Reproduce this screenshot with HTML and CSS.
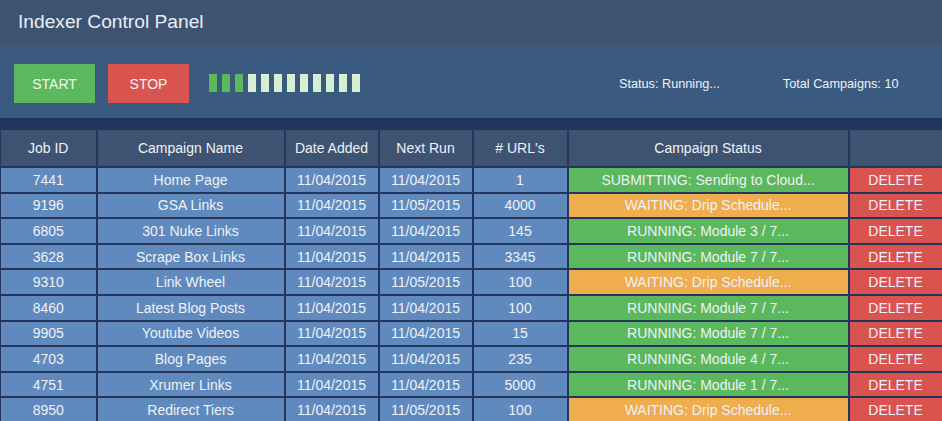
FILE: index.html
```html
<!DOCTYPE html>
<html>
<head>
<meta charset="utf-8">
<link rel="stylesheet" href="styles.css">
</head>
<body>
<header class="topbar"><h1 class="title">Indexer Control Panel</h1></header>
<section class="toolbar">
  <button class="btn btn-start">START</button>
  <button class="btn btn-stop">STOP</button>
  <div class="progress">
    <span class="seg on"></span><span class="seg on"></span><span class="seg on"></span>
    <span class="seg"></span><span class="seg"></span><span class="seg"></span><span class="seg"></span><span class="seg"></span><span class="seg"></span><span class="seg"></span><span class="seg"></span><span class="seg"></span>
  </div>
  <div class="info status">Status: Running...</div>
  <div class="info total">Total Campaigns: 10</div>
</section>
<div class="strip"></div>
<table class="grid">
  <colgroup>
    <col class="c-id"><col class="c-name"><col class="c-date"><col class="c-next"><col class="c-urls"><col class="c-status"><col class="c-del">
  </colgroup>
  <thead>
    <tr><th>Job ID</th><th>Campaign Name</th><th>Date Added</th><th>Next Run</th><th># URL's</th><th>Campaign Status</th><th></th></tr>
  </thead>
  <tbody>
    <tr><td>7441</td><td>Home Page</td><td>11/04/2015</td><td>11/04/2015</td><td>1</td><td class="st green">SUBMITTING: Sending to Cloud...</td><td class="del">DELETE</td></tr>
    <tr><td>9196</td><td>GSA Links</td><td>11/04/2015</td><td>11/05/2015</td><td>4000</td><td class="st orange">WAITING: Drip Schedule...</td><td class="del">DELETE</td></tr>
    <tr><td>6805</td><td>301 Nuke Links</td><td>11/04/2015</td><td>11/04/2015</td><td>145</td><td class="st green">RUNNING: Module 3 / 7...</td><td class="del">DELETE</td></tr>
    <tr><td>3628</td><td>Scrape Box Links</td><td>11/04/2015</td><td>11/04/2015</td><td>3345</td><td class="st green">RUNNING: Module 7 / 7...</td><td class="del">DELETE</td></tr>
    <tr><td>9310</td><td>Link Wheel</td><td>11/04/2015</td><td>11/05/2015</td><td>100</td><td class="st orange">WAITING: Drip Schedule...</td><td class="del">DELETE</td></tr>
    <tr><td>8460</td><td>Latest Blog Posts</td><td>11/04/2015</td><td>11/04/2015</td><td>100</td><td class="st green">RUNNING: Module 7 / 7...</td><td class="del">DELETE</td></tr>
    <tr><td>9905</td><td>Youtube Videos</td><td>11/04/2015</td><td>11/04/2015</td><td>15</td><td class="st green">RUNNING: Module 7 / 7...</td><td class="del">DELETE</td></tr>
    <tr><td>4703</td><td>Blog Pages</td><td>11/04/2015</td><td>11/04/2015</td><td>235</td><td class="st green">RUNNING: Module 4 / 7...</td><td class="del">DELETE</td></tr>
    <tr><td>4751</td><td>Xrumer Links</td><td>11/04/2015</td><td>11/04/2015</td><td>5000</td><td class="st green">RUNNING: Module 1 / 7...</td><td class="del">DELETE</td></tr>
    <tr><td>8950</td><td>Redirect Tiers</td><td>11/04/2015</td><td>11/05/2015</td><td>100</td><td class="st orange">WAITING: Drip Schedule...</td><td class="del">DELETE</td></tr>
  </tbody>
</table>
</body>
</html>
```
FILE: styles.css
```css
html, body {
  margin: 0;
  padding: 0;
  background: #22365c;
  font-family: "Liberation Sans", Arial, sans-serif;
  overflow: hidden;
}
.topbar {
  height: 45px;
  background: #3e5372;
  display: flex;
  align-items: center;
  padding-left: 18px;
}
.title {
  margin: 0;
  font-weight: normal;
  font-size: 19.2px;
  color: #e9eef6;
  position: relative;
  top: -1px;
}
.toolbar {
  height: 73px;
  background: #3a5a80;
  display: flex;
  align-items: flex-start;
  padding-left: 14px;
  box-sizing: border-box;
  padding-top: 19px;
}
.btn {
  width: 81px;
  height: 39px;
  border: none;
  margin: 0;
  padding: 0;
  color: #f4f6f4;
  font-family: "Liberation Sans", Arial, sans-serif;
  font-size: 14px;
}
.btn-start { background: #5cb85c; }
.btn-stop { background: #d9534f; margin-left: 13px; }
.progress {
  display: flex;
  gap: 5px;
  margin-left: 20px;
  margin-top: 10px;
}
.seg {
  width: 8px;
  height: 18px;
  background: #d5eed4;
}
.seg.on { background: #5cb85c; }
.info {
  color: #eef2f7;
  font-size: 12.7px;
  margin-top: 13px;
}
.status { margin-left: 259px; }
.total { margin-left: 63px; }
.strip { height: 10px; background: #22365c; }
.grid {
  width: 942px;
  border-collapse: collapse;
  table-layout: fixed;
  background: #22365c;
}
.c-id { width: 96px; }
.c-name { width: 188px; }
.c-date { width: 94px; }
.c-next { width: 94px; }
.c-urls { width: 95px; }
.c-status { width: 281px; }
.c-del { width: 94px; }
.grid th, .grid td {
  border: 2px solid #22365c;
  text-align: center;
  padding: 0;
  font-size: 14px;
  color: #eef2f8;
  font-weight: normal;
  white-space: nowrap;
  overflow: hidden;
}
.grid th {
  background: #3e5372;
  height: 36px;
}
.grid td {
  background: #6089be;
  height: 23.6px;
}
.grid td.green { background: #5cb85c; }
.grid td.orange { background: #f0ad4e; }
.grid td.del { background: #d9534f; }
.grid th:first-child, .grid td:first-child { border-left-width: 1px; }
```
